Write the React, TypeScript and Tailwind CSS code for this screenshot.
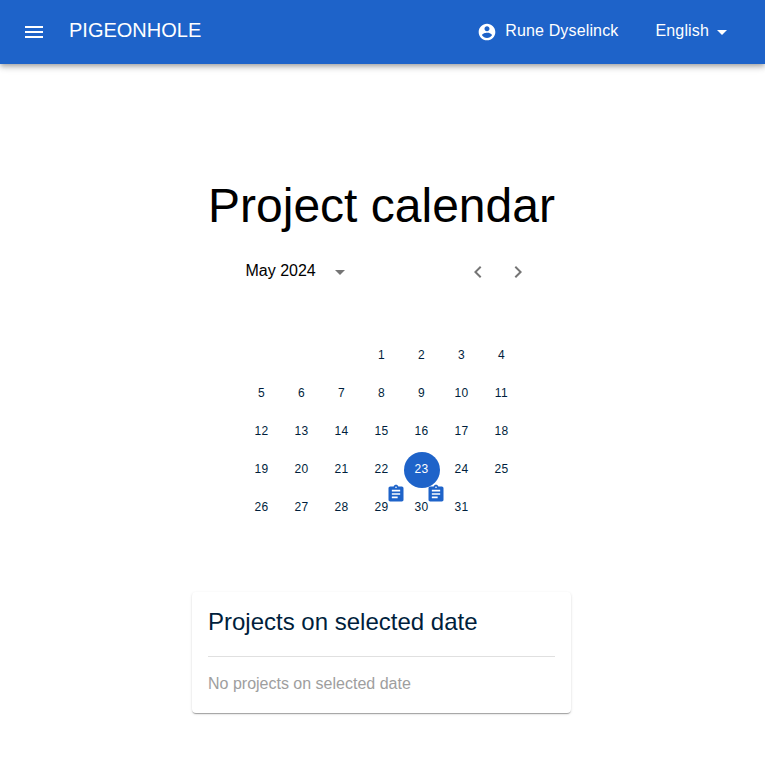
import React from "react";

const BLUE = "text-[#1e63c9]";

function Icon({ d, className }: { d: string; className: string }) {
  return (
    <svg viewBox="0 0 24 24" fill="currentColor" className={className} aria-hidden="true">
      <path d={d} />
    </svg>
  );
}

const icons = {
  menu: "M3 18h18v-2H3v2zm0-5h18v-2H3v2zm0-7v2h18V6H3z",
  account:
    "M12 2C6.48 2 2 6.48 2 12s4.48 10 10 10 10-4.48 10-10S17.52 2 12 2zm0 3c1.66 0 3 1.34 3 3s-1.34 3-3 3-3-1.34-3-3 1.34-3 3-3zm0 14.2c-2.5 0-4.71-1.28-6-3.22.03-1.99 4-3.08 6-3.08 1.99 0 5.97 1.09 6 3.08-1.29 1.94-3.5 3.22-6 3.22z",
  drop: "M7 10l5 5 5-5z",
  left: "M15.41 16.59L10.83 12l4.58-4.59L14 6l-6 6 6 6 1.41-1.41z",
  right: "M8.59 16.59L13.17 12 8.59 7.41 10 6l6 6-6 6-1.41-1.41z",
  assignment:
    "M19 3h-4.18C14.4 1.84 13.3 1 12 1c-1.3 0-2.4.84-2.82 2H5c-1.1 0-2 .9-2 2v14c0 1.1.9 2 2 2h14c1.1 0 2-.9 2-2V5c0-1.1-.9-2-2-2zm-7 0c.55 0 1 .45 1 1s-.45 1-1 1-1-.45-1-1 .45-1 1-1zm2 14H7v-2h7v2zm3-4H7v-2h10v2zm0-4H7V7h10v2z",
};

const weeks: number[][] = [0, 1, 2, 3, 4].map((w) =>
  [0, 1, 2, 3, 4, 5, 6].map((d) => w * 7 + d - 2)
);

function Day({ day }: { day: number }) {
  if (day < 1 || day > 31) return <div className="mx-0.5 size-9" />;
  const selected = day === 23;
  return (
    <div className="relative mx-0.5 size-9">
      <button
        className={
          selected
            ? "block size-9 rounded-full bg-[#1e63c9] pb-0.5 text-center text-xs tracking-[0.4px] text-white"
            : "block size-9 rounded-full pb-0.5 text-center text-xs tracking-[0.4px] text-[#001e3c]"
        }
      >
        {day}
      </button>
      {(day === 29 || day === 30) && (
        <Icon d={icons.assignment} className={`absolute -top-1.5 left-[22px] size-5 ${BLUE}`} />
      )}
    </div>
  );
}

export default function App() {
  return (
    <div className="min-h-[763px] bg-white font-['Liberation_Sans',Arial,sans-serif] text-[#001e3c]">
      <header className="flex h-16 items-center bg-[#1e63c9] px-[22px] text-white shadow-[0px_2px_4px_-1px_rgba(0,0,0,0.2),0px_4px_5px_0px_rgba(0,0,0,0.14),0px_1px_10px_0px_rgba(0,0,0,0.12)]">
        <Icon d={icons.menu} className="size-6" />
        <span className="ml-[23px] pb-1 text-xl">PIGEONHOLE</span>
        <div className="ml-auto flex items-center">
          <Icon d={icons.account} className="size-5" />
          <span className="ml-2 pb-0.5 text-base tracking-[0.15px]">Rune Dyselinck</span>
          <span className="ml-[37px] pb-0.5 text-base tracking-[0.15px]">English</span>
          <Icon d={icons.drop} className="ml-px mr-[9px] size-6" />
        </div>
      </header>
      <main className="flex flex-col items-center pr-[2px] pt-[114px]">
        <h1 className="h-14 text-5xl leading-[56px] text-black">Project calendar</h1>
        <section className="mt-4 w-[320px]">
          <div className="flex h-11 items-center pl-6 pr-3">
            <span className="pb-0.5 text-base text-black">May 2024</span>
            <Icon d={icons.drop} className="ml-3 size-6 text-[#757575]" />
            <div className="ml-auto flex gap-4">
              <Icon d={icons.left} className="size-6 text-[#757575]" />
              <Icon d={icons.right} className="size-6 text-[#757575]" />
            </div>
          </div>
          <div className="mt-11 flex flex-col items-center gap-0.5">
            {weeks.map((week, i) => (
              <div key={i} className="flex">
                {week.map((day) => (
                  <Day key={day} day={day} />
                ))}
              </div>
            ))}
          </div>
        </section>
        <section className="mt-[66px] h-[121px] w-[379px] rounded bg-white px-4 pt-3 shadow-[0px_2px_1px_-1px_rgba(0,0,0,0.2),0px_1px_1px_0px_rgba(0,0,0,0.14),0px_1px_3px_0px_rgba(0,0,0,0.12)]">
          <h2 className="h-[53px] border-b border-black/12 text-2xl leading-9">
            Projects on selected date
          </h2>
          <p className="pt-[15px] text-base text-[#9e9e9e]">No projects on selected date</p>
        </section>
      </main>
    </div>
  );
}
